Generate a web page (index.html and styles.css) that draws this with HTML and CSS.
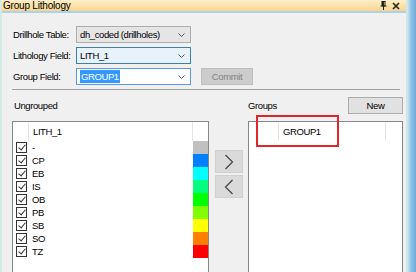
FILE: index.html
```html
<!DOCTYPE html>
<html lang="en">
<head>
    <meta charset="UTF-8">
    <title>Group Lithology</title>
    <link rel="stylesheet" href="styles.css">
</head>
<body>
    <div class="panel">
        <div class="titlebar">
            <span class="title">Group Lithology</span>
            <div class="title-icons">
                <svg width="7" height="9" viewBox="0 0 7 9"><path d="M1.5 0.5h4M2 0.5v4.5h3V0.5M0.5 5h6M3.5 5v4" stroke="#222" stroke-width="1" fill="none"/><rect x="2" y="1" width="2" height="4" fill="#222"/></svg>
                <svg width="8" height="8" viewBox="0 0 8 8"><path d="M1 1L7 7M7 1L1 7" stroke="#222" stroke-width="1.6"/></svg>
            </div>
        </div>

        <div class="content">
            <div class="form-row">
                <label>Drillhole Table:</label>
                <div class="combo combo-readonly">
                    <span>dh_coded (drillholes)</span>
                    <svg class="chevron" width="7" height="4" viewBox="0 0 7 4"><path d="M0.5 0.5L3.5 3.5L6.5 0.5" stroke="#555" fill="none"/></svg>
                </div>
            </div>
            <div class="form-row">
                <label>Lithology Field:</label>
                <div class="combo combo-hover">
                    <span>LITH_1</span>
                    <svg class="chevron" width="7" height="4" viewBox="0 0 7 4"><path d="M0.5 0.5L3.5 3.5L6.5 0.5" stroke="#555" fill="none"/></svg>
                </div>
            </div>
            <div class="form-row">
                <label>Group Field:</label>
                <div class="combo combo-focus">
                    <span class="selected">GROUP1</span>
                    <svg class="chevron" width="7" height="4" viewBox="0 0 7 4"><path d="M0.5 0.5L3.5 3.5L6.5 0.5" stroke="#555" fill="none"/></svg>
                </div>
                <button class="btn btn-disabled commit">Commit</button>
            </div>

            <div class="separator"></div>

            <div class="lists">
                <div class="list-label">Ungrouped</div>
                <div></div>
                <div class="groups-head">
                    <span>Groups</span>
                    <button class="btn new">New</button>
                </div>

                <div class="listbox">
                    <div class="list-header">
                        <div class="col-check"></div>
                        <div class="col-name">LITH_1</div>
                        <div class="col-color"></div>
                    </div>
                    <div class="list-row"><span class="check"></span><span class="name">-</span><span class="swatch" style="background:#c0c0c0"></span></div>
                    <div class="list-row"><span class="check"></span><span class="name">CP</span><span class="swatch" style="background:#0080ff"></span></div>
                    <div class="list-row"><span class="check"></span><span class="name">EB</span><span class="swatch" style="background:#00ffff"></span></div>
                    <div class="list-row"><span class="check"></span><span class="name">IS</span><span class="swatch" style="background:#00ff80"></span></div>
                    <div class="list-row"><span class="check"></span><span class="name">OB</span><span class="swatch" style="background:#00ff00"></span></div>
                    <div class="list-row"><span class="check"></span><span class="name">PB</span><span class="swatch" style="background:#80ff00"></span></div>
                    <div class="list-row"><span class="check"></span><span class="name">SB</span><span class="swatch" style="background:#ffff00"></span></div>
                    <div class="list-row"><span class="check"></span><span class="name">SO</span><span class="swatch" style="background:#ff8000"></span></div>
                    <div class="list-row"><span class="check"></span><span class="name">TZ</span><span class="swatch" style="background:#ff0000"></span></div>
                </div>

                <div class="move-buttons">
                    <button class="btn arrow">
                        <svg width="10" height="16" viewBox="0 0 10 16"><path d="M1.5 1L8.5 8L1.5 15" stroke="#444" stroke-width="1.2" fill="none"/></svg>
                    </button>
                    <button class="btn arrow">
                        <svg width="10" height="16" viewBox="0 0 10 16"><path d="M8.5 1L1.5 8L8.5 15" stroke="#444" stroke-width="1.2" fill="none"/></svg>
                    </button>
                </div>

                <div class="listbox groups-box">
                    <div class="list-header">
                        <div class="col-blank"></div>
                        <div class="col-group">GROUP1</div>
                        <div class="col-end"></div>
                    </div>
                    <!-- annotation box -->
                    <div class="highlight"></div>
                </div>
            </div>
        </div>
    </div>
    <div class="side-strip"></div>
</body>
</html>
```

FILE: styles.css
```css
body {
    margin: 0;
    width: 416px;
    height: 272px;
    overflow: hidden;
    display: flex;
    font-family: "Liberation Sans", Arial, sans-serif;
    font-size: 9.5px;
    letter-spacing: -0.4px;
    color: #000;
    background-color: #f0f0f0;
    white-space: nowrap;
}

.panel {
    width: 406px;
    display: flex;
    flex-direction: column;
    border-left: 2px solid #d3ebe3;
    border-right: 2px solid #cfe6e6;
}

.titlebar {
    height: 15px;
    display: flex;
    align-items: center;
    justify-content: space-between;
    padding: 0 6px 0 1px;
    background: linear-gradient(#fdefc9, #f9d48c);
    border-bottom: 2px solid #a9d2ee;
}

.title {
    font-size: 10px;
    letter-spacing: -0.2px;
}

.title-icons {
    display: flex;
    align-items: center;
    gap: 5px;
}

.content {
    flex: 1;
    padding: 13px 0 0 10px;
}

.form-row {
    display: flex;
    align-items: center;
    height: 17px;
    margin-bottom: 4px;
}

.form-row label {
    width: 63px;
    flex-shrink: 0;
    padding-left: 1px;
}

.combo {
    width: 105px;
    height: 15px;
    flex-shrink: 0;
    display: flex;
    align-items: center;
    justify-content: space-between;
    padding: 0 5px 0 3px;
    border: 1px solid #adadad;
}

.combo-readonly {
    background-color: #e5e5e5;
}

.combo-hover {
    background-color: #e8f2fb;
    border-color: #3c7fb1;
}

.combo-focus {
    background-color: #fff;
    border-color: #569de5;
}

.selected {
    background-color: #3399ff;
    color: #fff;
    padding: 0 1px;
    line-height: 13px;
}

.btn {
    font-family: inherit;
    font-size: inherit;
    letter-spacing: inherit;
    border: 1px solid #adadad;
    background-color: #e1e1e1;
    color: #000;
    padding: 0;
    flex-shrink: 0;
}

.btn-disabled {
    background-color: #cccccc;
    border-color: #bfbfbf;
    color: #838383;
}

.commit {
    width: 52px;
    height: 17px;
    margin-left: 10px;
}

.separator {
    height: 1px;
    width: 388px;
    background-color: #a0a0a0;
    margin-top: 3px;
}

.lists {
    display: grid;
    grid-template-columns: 197px 39px 155px;
    grid-template-rows: 17px auto;
    row-gap: 7px;
    margin-top: 7px;
}

.list-label {
    display: flex;
    align-items: center;
    padding-left: 2px;
}

.groups-head {
    display: flex;
    align-items: center;
    justify-content: space-between;
}

.new {
    width: 55px;
    height: 17px;
}

.listbox {
    height: 160px;
    background-color: #fff;
    border: 1px solid #828790;
    box-sizing: border-box;
}

.list-header {
    display: flex;
    height: 19px;
}

.col-check {
    width: 15px;
    border-right: 1px solid #e5e5e5;
}

.col-name {
    flex: 1;
    padding: 4px 0 0 4px;
}

.col-color {
    width: 15px;
    border-left: 1px solid #e5e5e5;
}

.list-row {
    display: flex;
    align-items: center;
    height: 13px;
}

.check {
    width: 9px;
    height: 9px;
    margin: 0 4px 0 3px;
    border: 1px solid #333;
    position: relative;
}

.check::after {
    content: "";
    position: absolute;
    left: 3px;
    top: 0;
    width: 3px;
    height: 6px;
    border: solid #333;
    border-width: 0 1px 1px 0;
    transform: rotate(40deg);
}

.name {
    flex: 1;
    padding-left: 1px;
}

.swatch {
    width: 15px;
    height: 13px;
    margin-left: 1px;
}

.move-buttons {
    display: flex;
    flex-direction: column;
    align-items: center;
    gap: 2px;
    padding-top: 29px;
}

.arrow {
    width: 28px;
    height: 23px;
    display: flex;
    align-items: center;
    justify-content: center;
    background-color: #dadada;
    border-color: #d0d0d0;
}

.groups-box {
    position: relative;
}

.col-blank {
    width: 29px;
    border-right: 1px solid #e5e5e5;
}

.col-group {
    flex: 1;
    padding: 4px 0 0 4px;
}

.col-end {
    width: 16px;
    border-left: 1px solid #e5e5e5;
}

.highlight {
    position: absolute;
    left: 7px;
    top: -7px;
    width: 79px;
    height: 28px;
    border: 2px solid #e2242b;
}

.side-strip {
    width: 8px;
    background: linear-gradient(90deg, #c4dff0, #8cc0e6 40%, #6fa9db);
}
```
